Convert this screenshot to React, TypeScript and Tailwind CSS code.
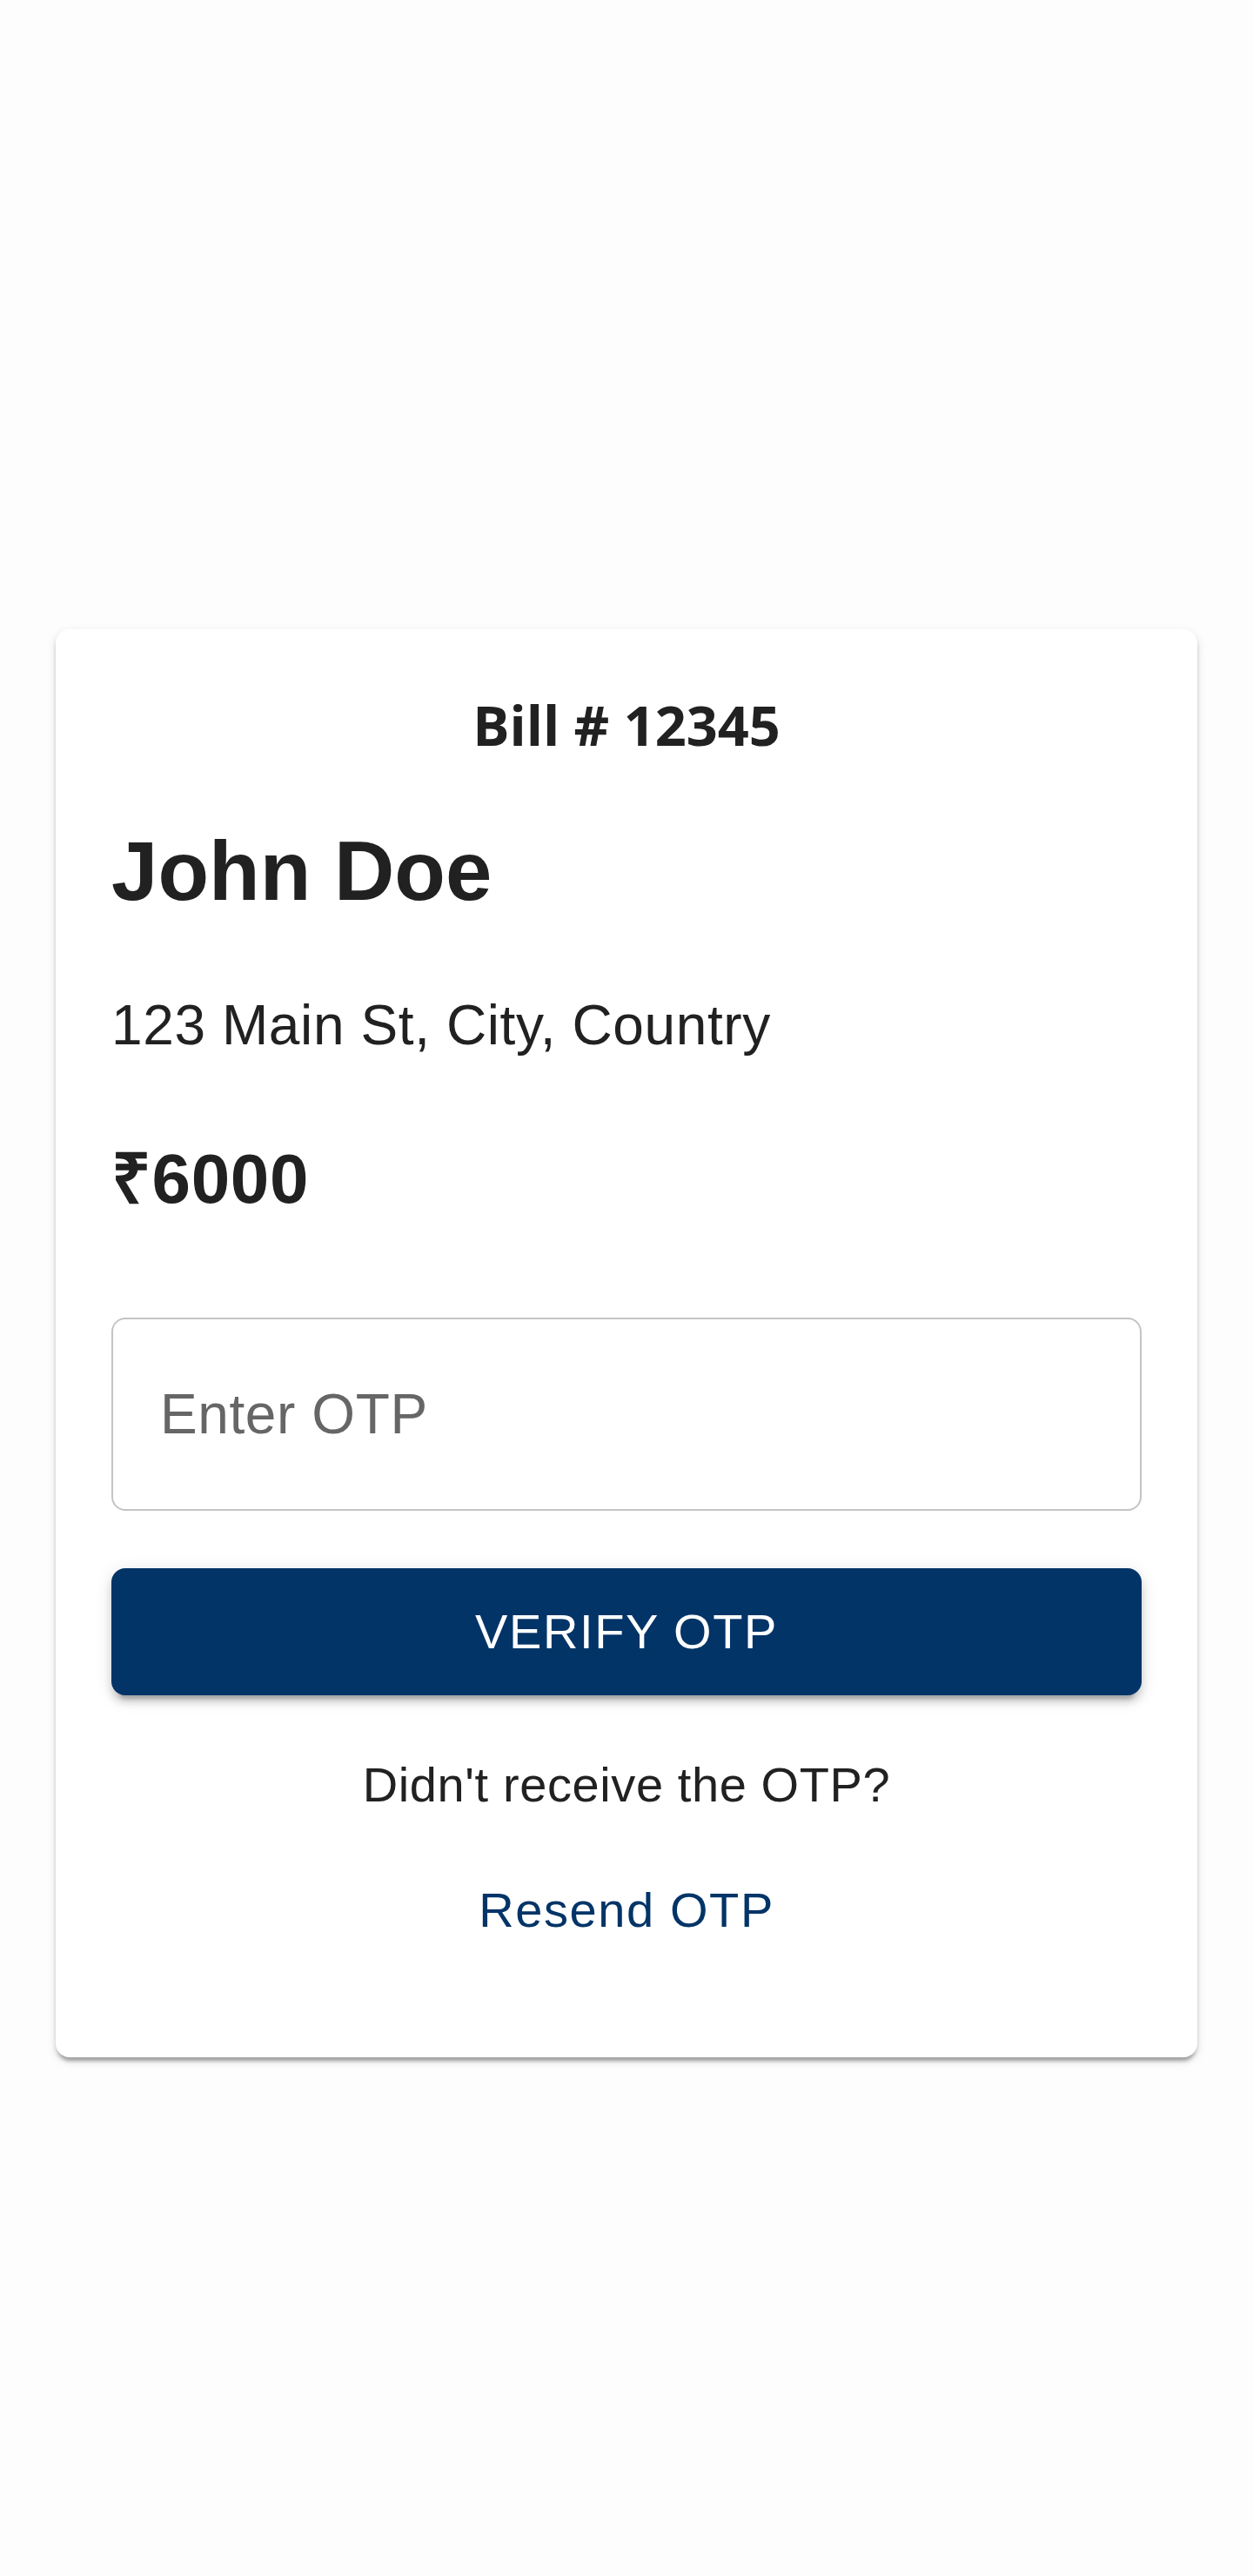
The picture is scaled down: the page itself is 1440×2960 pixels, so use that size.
import React, { useState } from 'react';

const App: React.FC = () => {
  const [otp, setOtp] = useState('');

  return (
    <div className="min-h-screen bg-[#fdfdfd] px-[64px] pt-[723px] pb-[596px] font-['Liberation_Sans',Arial,sans-serif] text-[#212121]">
      <div className="rounded-[16px] bg-white px-[64px] pt-[64px] pb-[127px] shadow-[0_8px_4px_-4px_rgba(0,0,0,0.2),0_4px_4px_0_rgba(0,0,0,0.14),0_4px_12px_0_rgba(0,0,0,0.12)]">
        <h2 className="text-center font-['Open_Sans',sans-serif] text-[63px] leading-[92px] font-bold">
          Bill # 12345
        </h2>
        <h1 className="mt-[58px] text-[96px] leading-[128px] font-bold">John Doe</h1>
        <p className="mt-[65px] text-[64px] leading-[96px] tracking-[0.6px]">123 Main St, City, Country</p>
        <p className="mt-[65px] text-[80px] leading-[128px] font-bold tracking-[0.6px]">₹6000</p>

        <input
          value={otp}
          onChange={(e) => setOtp(e.target.value)}
          placeholder="Enter OTP"
          className="mt-[95px] block h-[222px] w-full rounded-[16px] border-2 border-[#c4c4c4] bg-white px-[54px] text-[64px] tracking-[0.6px] text-[#212121] outline-none placeholder:text-[#666666]"
        />

        <button className="mt-[66px] block h-[146px] w-full rounded-[16px] bg-[#023467] text-[56px] tracking-[1.6px] text-white uppercase shadow-[0_12px_4px_-8px_rgba(0,0,0,0.2),0_8px_8px_0_rgba(0,0,0,0.14),0_4px_20px_0_rgba(0,0,0,0.12)]">
          Verify OTP
        </button>

        <p className="mt-[61px] text-center text-[56px] leading-[84px] tracking-[0.6px]">Didn't receive the OTP?</p>
        <div className="mt-[60px] text-center">
          <button className="text-[56px] leading-[84px] tracking-[1.6px] text-[#023467]">Resend OTP</button>
        </div>
      </div>
    </div>
  );
};

export default App;
